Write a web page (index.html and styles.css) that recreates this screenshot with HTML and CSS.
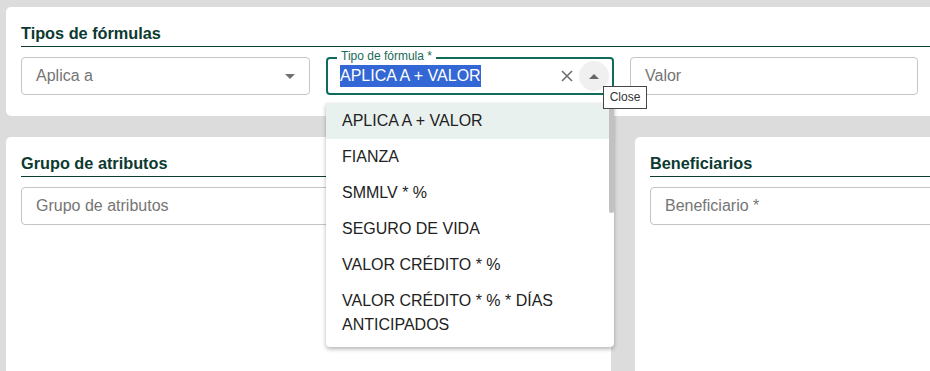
FILE: index.html
```html
<!DOCTYPE html>
<html lang="es">
<head>
<meta charset="UTF-8" />
<title>Tipos de fórmulas</title>
<link rel="stylesheet" href="styles.css">
</head>
<body>

<div class="page">
  <section class="card">
    <h3 class="card-title">Tipos de fórmulas</h3>
    <div class="fields">
      <div class="field">
        <span class="placeholder">Aplica a</span>
        <span class="caret"></span>
      </div>

      <div class="field focused">
        <label class="float-label">Tipo de fórmula *</label>
        <span class="value"><span class="sel">APLICA A + VALOR</span></span>
        <button class="clear-btn" aria-label="Clear">
          <svg width="12" height="12" viewBox="0 0 12 12"><path d="M1 1L11 11M11 1L1 11" stroke="#6e6e6e" stroke-width="1.6" fill="none"/></svg>
        </button>
        <button class="open-btn" aria-label="Close"><span class="caret up"></span></button>
        <div class="tooltip">Close</div>

        <div class="dropdown">
          <ul>
            <li class="active">APLICA A + VALOR</li>
            <li>FIANZA</li>
            <li>SMMLV * %</li>
            <li>SEGURO DE VIDA</li>
            <li>VALOR CRÉDITO * %</li>
            <li>VALOR CRÉDITO * % * DÍAS ANTICIPADOS</li>
          </ul>
          <div class="thumb"></div>
        </div>
      </div>

      <div class="field">
        <span class="placeholder">Valor</span>
      </div>
    </div>
  </section>

  <div class="row">
    <section class="card card-left">
      <h3 class="card-title">Grupo de atributos</h3>
      <div class="fields single">
        <div class="field wide">
          <span class="placeholder">Grupo de atributos</span>
        </div>
      </div>
    </section>
    <section class="card card-right">
      <h3 class="card-title">Beneficiarios</h3>
      <div class="fields single">
        <div class="field wide">
          <span class="placeholder">Beneficiario *</span>
        </div>
      </div>
    </section>
  </div>
</div>

</body>
</html>
```

FILE: styles.css
```css
body {
  margin: 0;
  background: #dcdcdc;
  font-family: 'Liberation Sans', Arial, sans-serif;
  overflow: hidden;
}
.page {
  width: 960px;
  padding: 7px 0 0 6px;
}
.card {
  background: #fff;
  border-radius: 5px;
  padding: 16px 15px 21px;
}
.card-title {
  margin: 0;
  padding-bottom: 3px;
  font-size: 16.3px;
  font-weight: bold;
  line-height: 20px;
  color: #0c3a30;
  border-bottom: 1px solid #0c3d33;
}
.fields {
  display: grid;
  grid-template-columns: 289px 288px 288px;
  column-gap: 16px;
  margin-top: 10px;
}
.fields.single {
  grid-template-columns: 1fr;
}
.field {
  position: relative;
  box-sizing: border-box;
  height: 38px;
  display: flex;
  align-items: center;
  padding: 0 14px;
  border: 1px solid #c4c4c4;
  border-radius: 4px;
  font-size: 16px;
}
.placeholder {
  color: #757575;
}
.caret {
  margin-left: auto;
  width: 0;
  height: 0;
  border-left: 5px solid transparent;
  border-right: 5px solid transparent;
  border-top: 5px solid #707070;
}
.caret.up {
  margin: 0;
  border-top: none;
  border-bottom: 5px solid #666;
}
.field.focused {
  border: 2px solid #0f6b5a;
  padding: 0 3px 0 12px;
}
.float-label {
  position: absolute;
  top: -10px;
  left: 9px;
  padding: 0 4px;
  background: #fff;
  font-size: 12px;
  line-height: 14px;
  color: #1a6a59;
}
.sel {
  display: inline-block;
  line-height: 22px;
  background: #3367d6;
  color: #fff;
}
.clear-btn {
  margin-left: auto;
  width: 24px;
  height: 24px;
  padding: 0;
  border: none;
  background: none;
  display: flex;
  align-items: center;
  justify-content: center;
}
.open-btn {
  width: 30px;
  height: 30px;
  padding: 0;
  border: none;
  border-radius: 50%;
  background: #f0f0f0;
  display: flex;
  align-items: center;
  justify-content: center;
}
.tooltip {
  position: absolute;
  left: 275px;
  top: 27px;
  z-index: 10;
  box-sizing: border-box;
  width: 44px;
  height: 23px;
  border: 1px solid #454545;
  background: #fff;
  color: #333;
  font-size: 12px;
  line-height: 21px;
  text-align: center;
}
.dropdown {
  position: absolute;
  left: -2px;
  top: 44px;
  z-index: 5;
  width: 288px;
  padding-bottom: 4px;
  background: #fff;
  border-radius: 0 0 4px 4px;
  box-shadow: 0 2px 4px rgba(0,0,0,0.3);
}
.dropdown ul {
  list-style: none;
  margin: 0;
  padding: 0 5px 0 0;
}
.dropdown li {
  padding: 6px 16px;
  line-height: 24px;
  color: #222;
}
.dropdown li.active {
  background: #e9f1ef;
}
.thumb {
  position: absolute;
  top: 0;
  right: 0;
  width: 5px;
  height: 110px;
  border-radius: 3px;
  background: #c1c1c1;
}
.row {
  display: flex;
  gap: 24px;
  margin-top: 21px;
}
.card-left {
  width: 605px;
  box-sizing: border-box;
  min-height: 300px;
}
.card-right {
  flex: 1;
  min-height: 300px;
}
```
